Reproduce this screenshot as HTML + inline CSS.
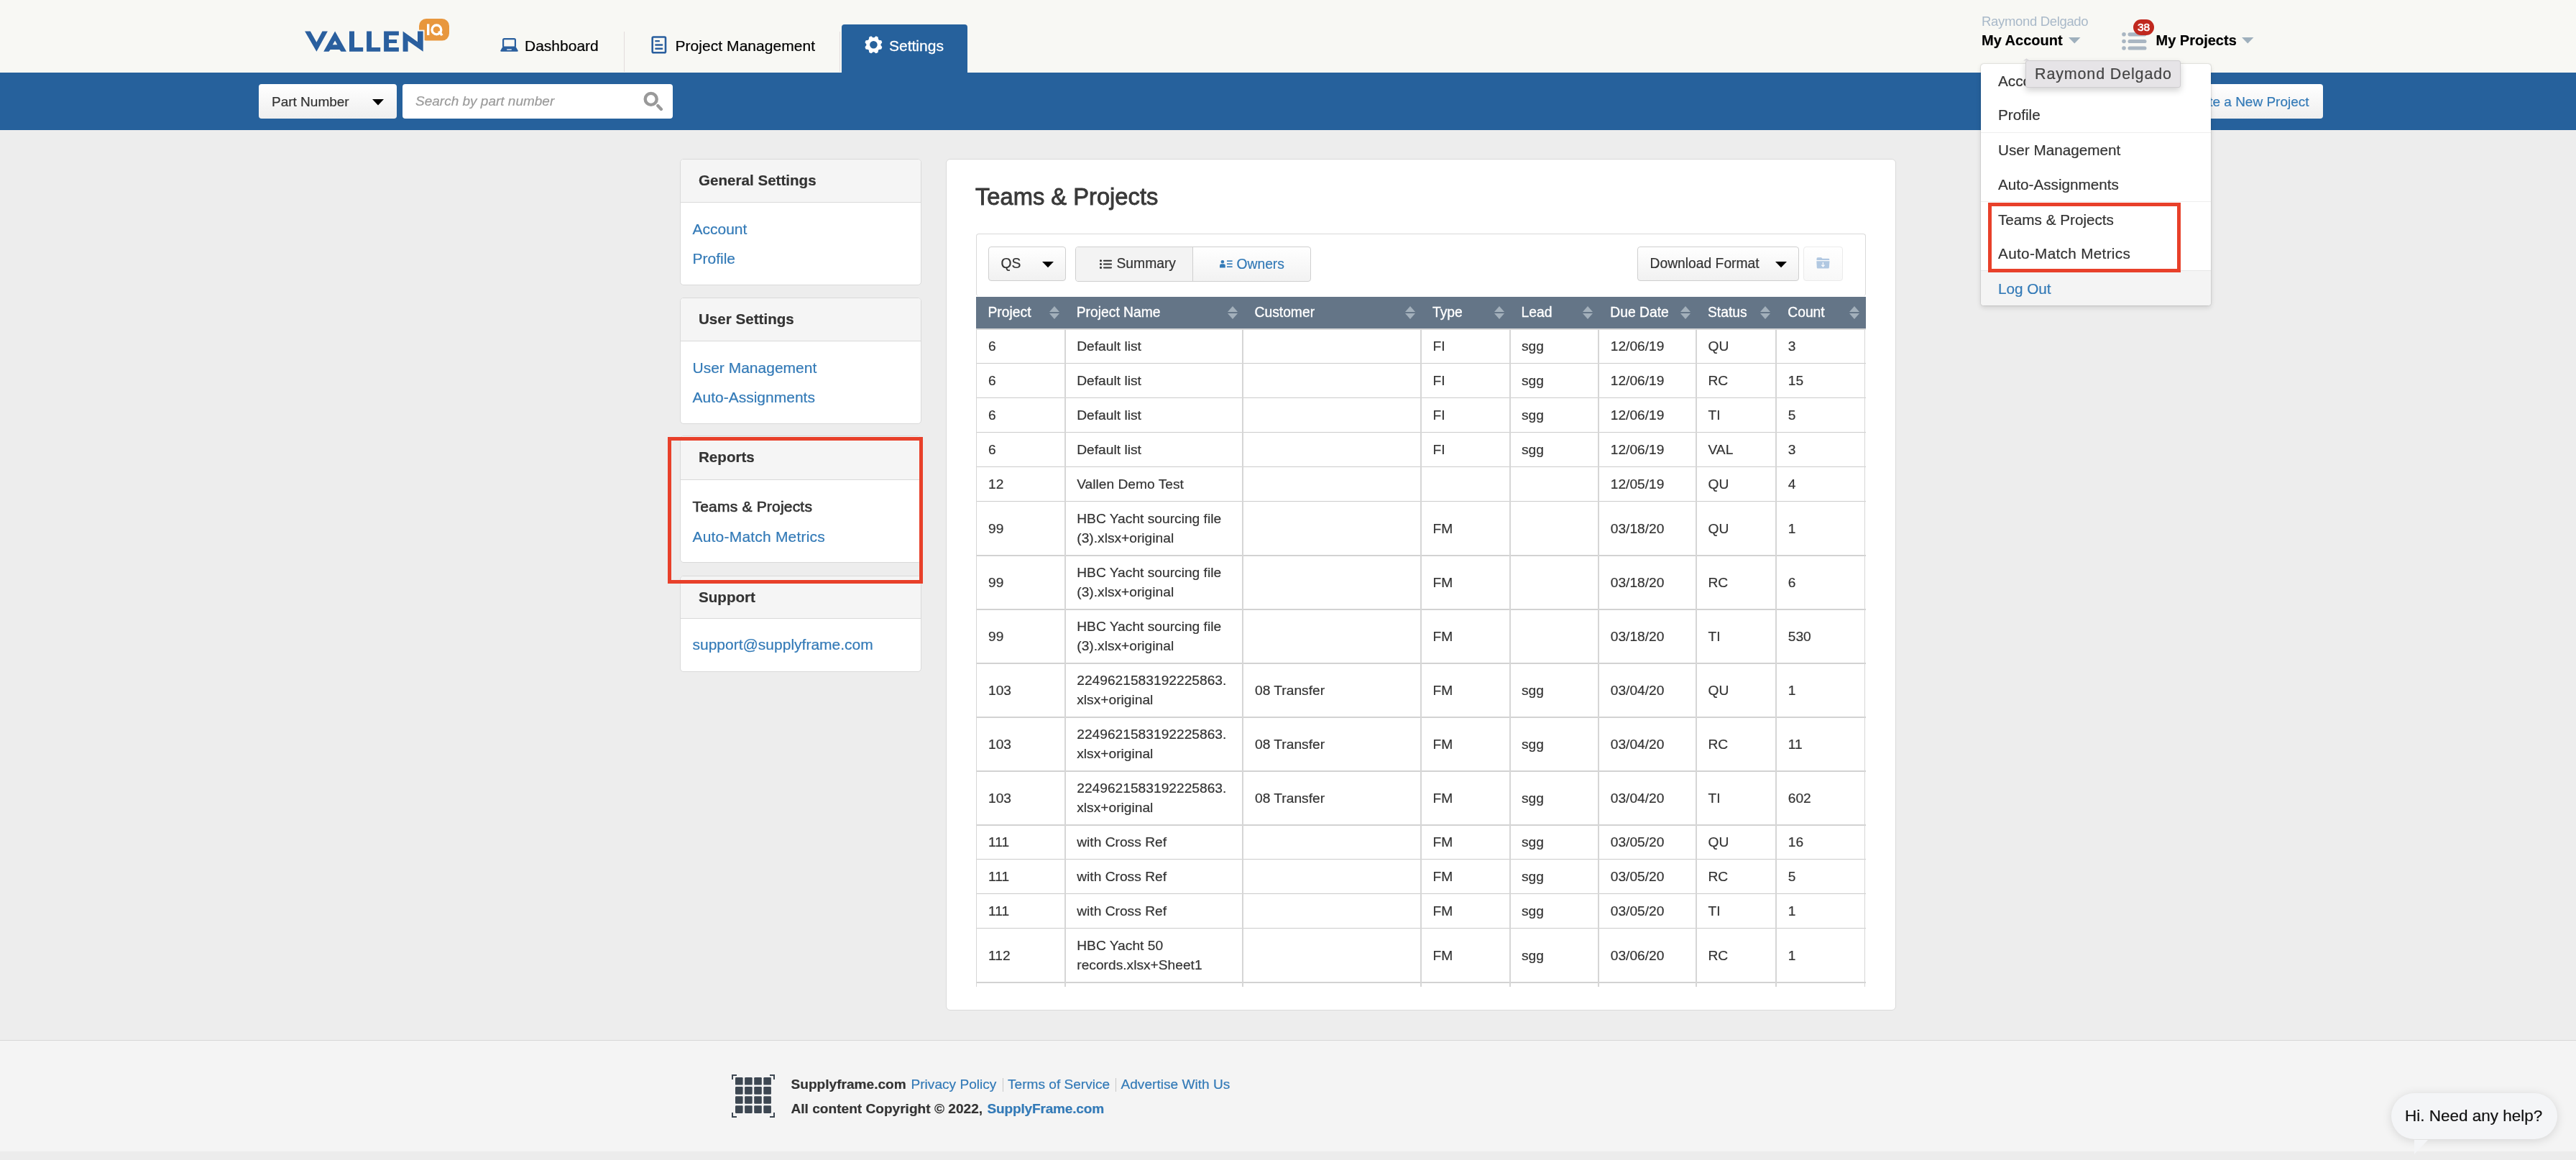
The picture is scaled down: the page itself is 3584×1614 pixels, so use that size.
<!DOCTYPE html>
<html><head><meta charset="utf-8"><title>Teams &amp; Projects</title>
<style>
html,body{margin:0;padding:0;width:3584px;height:1614px;overflow:hidden;background:#ececec}
body{position:relative;font-family:"Liberation Sans", sans-serif}
.t{position:absolute;white-space:nowrap;-webkit-text-stroke:0.2px currentColor}
.r{position:absolute;display:block}
</style></head><body><div id="root" style="position:absolute;left:0;top:0;width:3584px;height:1614px;will-change:transform;overflow:hidden">
<div class="r" style="left:0px;top:0px;width:3584px;height:101px;background:#f8f8f4"></div><div class="r" style="left:0px;top:101px;width:3584px;height:80px;background:#26619c"></div><div class="r" style="left:0px;top:181px;width:3584px;height:1266px;background:#ededed"></div><div class="r" style="left:0px;top:1447px;width:3584px;height:1px;background:#d6d6d6"></div><div class="r" style="left:0px;top:1448px;width:3584px;height:154px;background:#f4f4f4"></div><div class="r" style="left:0px;top:1602px;width:3584px;height:12px;background:#ececec"></div><svg class="r" style="left:0px;top:0px" width="640" height="80" viewBox="0 0 640 80"><polygon fill="#2a5f9e" points="424.1,43.6 431.8,43.6 440.4,58.7 448.5,43.6 455.9,43.6 440.4,71.7"/><path fill="#2a5f9e" fill-rule="evenodd" d="M450.2,71.7 L466.1,43.6 L482,71.7 L474.6,71.7 L472.3,68.9 L459.6,68.9 L457.5,71.7 Z M462.8,62.3 L469.3,62.3 L466.1,56.6 Z"/><polygon fill="#2a5f9e" points="486.0,43.6 493.0,43.6 493.0,66.0 505.2,66.0 505.2,71.7 486.0,71.7"/><polygon fill="#2a5f9e" points="510.1,43.6 517.0,43.6 517.0,66.0 529.2,66.0 529.2,71.7 510.1,71.7"/><polygon fill="#2a5f9e" points="534.1,43.6 554.9,43.6 554.9,49.3 541.1,49.3 541.1,55.0 552.1,55.0 552.1,59.9 541.1,59.9 541.1,66.0 554.9,66.0 554.9,71.7 534.1,71.7"/><rect x="583" y="26.1" width="42" height="30.5" rx="10" fill="#e8973d"/><rect x="582" y="41.6" width="8.6" height="16" fill="#f8f8f4"/><polygon fill="#2a5f9e" points="560.6,71.7 560.6,43.6 581.0,58.3 581.0,43.6 588.7,43.6 588.7,71.7 567.6,57.0 567.6,71.7"/><rect x="594" y="33.4" width="3.4" height="15.5" fill="#fff"/><circle cx="607.4" cy="41.4" r="6.4" fill="none" stroke="#fff" stroke-width="3.3"/><polygon fill="#fff" points="609,44 613,43 616.5,48.5 613.5,50"/></svg><svg class="r" style="left:696px;top:53px" width="25" height="19" viewBox="0 0 25 19"><rect x="4.1" y="1.1" width="16.8" height="11.6" rx="1.6" fill="none" stroke="#2a5f9e" stroke-width="2.2"/><path d="M3.1,12.6 H21.9 L24.6,17.2 Q25,18.8 23.4,18.8 H1.6 Q0,18.8 0.4,17.2 Z" fill="#2a5f9e"/><rect x="9" y="15" width="7" height="1.9" rx="0.8" fill="#b3c6dc"/></svg><div class="t" style="left:730.00px;top:53.22px;font-size:21px;line-height:21px;color:#000;font-weight:normal;">Dashboard</div><div class="r" style="left:868px;top:44px;width:1px;height:56px;background:#e3dcdc"></div><svg class="r" style="left:906px;top:50px" width="22" height="25" viewBox="0 0 22 25"><rect x="1.7" y="1.5" width="18.3" height="21.7" rx="1.5" fill="none" stroke="#2a5f9e" stroke-width="2.6"/><rect x="5.3" y="5.9" width="6.6" height="2.4" rx="0.6" fill="#2a5f9e"/><rect x="5.3" y="11.2" width="10.9" height="2.5" rx="0.6" fill="#2a5f9e"/><rect x="5.3" y="16.4" width="10.9" height="2.5" rx="0.6" fill="#2a5f9e"/></svg><div class="t" style="left:939.50px;top:53.22px;font-size:21px;line-height:21px;color:#000;font-weight:normal;letter-spacing:0.05px">Project Management</div><div class="r" style="left:1168px;top:44px;width:1px;height:56px;background:#e3dcdc"></div><div class="r" style="left:1171px;top:34px;width:175px;height:67px;background:#26619c;border-radius:4px 4px 0 0"></div><svg class="r" style="left:1200px;top:47px" width="31" height="31" viewBox="0 0 31 31"><path fill="#fff" fill-rule="evenodd" d="M17.22,4.45 L18.71,3.35 L21.51,4.51 L21.79,6.34 A2.3,2.3 0 0,0 24.36,8.91 L26.19,9.19 L27.35,11.99 L26.25,13.48 A2.3,2.3 0 0,0 26.25,17.12 L27.35,18.61 L26.19,21.41 L24.36,21.69 A2.3,2.3 0 0,0 21.79,24.26 L21.51,26.09 L18.71,27.25 L17.22,26.15 A2.3,2.3 0 0,0 13.58,26.15 L12.09,27.25 L9.29,26.09 L9.01,24.26 A2.3,2.3 0 0,0 6.44,21.69 L4.61,21.41 L3.45,18.61 L4.55,17.12 A2.3,2.3 0 0,0 4.55,13.48 L3.45,11.99 L4.61,9.19 L6.44,8.91 A2.3,2.3 0 0,0 9.01,6.34 L9.29,4.51 L12.09,3.35 L13.58,4.45 A2.3,2.3 0 0,0 17.22,4.45 Z M15.4,10.0 A5.3,5.3 0 1,0 15.4,20.6 A5.3,5.3 0 1,0 15.4,10.0 Z"/></svg><div class="t" style="left:1237.00px;top:53.22px;font-size:21px;line-height:21px;color:#fff;font-weight:normal;-webkit-text-stroke:0.3px #fff">Settings</div><div class="r" style="left:360px;top:117px;width:192px;height:48px;background:linear-gradient(#ffffff,#efefef);border-radius:4px"></div><div class="t" style="left:378.00px;top:131.92px;font-size:19px;line-height:19px;color:#333;font-weight:normal;">Part Number</div><svg class="r" style="left:518px;top:137.5px" width="16" height="9" viewBox="0 0 16 9"><polygon points="0,0 16,0 8,8.5" fill="#000"/></svg><div class="r" style="left:560px;top:117px;width:376px;height:48px;background:#fff;border-radius:4px"></div><div class="t" style="left:578.00px;top:130.92px;font-size:19px;line-height:19px;color:#9a9a9a;font-weight:normal;font-style:italic">Search by part number</div><svg class="r" style="left:895px;top:127px" width="28" height="28" viewBox="0 0 28 28"><circle cx="10.7" cy="10.9" r="8" fill="none" stroke="#999" stroke-width="4.4"/><line x1="20.4" y1="20.2" x2="24.9" y2="24.9" stroke="#999" stroke-width="4.4" stroke-linecap="round"/></svg><div class="r" style="left:3012px;top:117px;width:220px;height:48px;background:linear-gradient(#ffffff,#efefef);border-radius:4px"></div><div class="t" style="left:3032.00px;top:131.92px;font-size:19px;line-height:19px;color:#337ab7;font-weight:normal;">Create a New Project</div><div class="t" style="left:2757.00px;top:20.94px;font-size:18.5px;line-height:18.5px;color:#a9b9c9;font-weight:normal;letter-spacing:-0.33px;-webkit-text-stroke:0">Raymond Delgado</div><div class="t" style="left:2757.00px;top:46.07px;font-size:20px;line-height:20px;color:#000;font-weight:bold;">My Account</div><svg class="r" style="left:2878px;top:52px" width="17" height="9" viewBox="0 0 17 9"><polygon points="0,0 16.5,0 8.25,8.6" fill="#9fb0bd"/></svg><svg class="r" style="left:2952px;top:45px" width="35" height="25" viewBox="0 0 35 25"><g fill="#a9b6c2"><circle cx="3" cy="2.8" r="2.8"/><circle cx="3" cy="12.5" r="2.8"/><circle cx="3" cy="22" r="2.8"/><rect x="8.5" y="0.2" width="26" height="5.2" rx="2.6"/><rect x="8.5" y="9.9" width="26" height="5.2" rx="2.6"/><rect x="8.5" y="19.4" width="26" height="5.2" rx="2.6"/></g></svg><div class="r" style="left:2968px;top:27px;width:29px;height:22px;background:#c0281e;border-radius:11px"></div><div class="t" style="left:2968.00px;top:30.18px;font-size:15.5px;line-height:15.5px;color:#fff;font-weight:normal;width:29px;text-align:center;-webkit-text-stroke:0.6px #fff">38</div><div class="t" style="left:2999.50px;top:46.07px;font-size:20px;line-height:20px;color:#000;font-weight:bold;">My Projects</div><svg class="r" style="left:3119px;top:52px" width="17" height="9" viewBox="0 0 17 9"><polygon points="0,0 16.5,0 8.25,8.6" fill="#9fb0bd"/></svg><div class="r" style="left:946px;top:221px;width:336px;height:176px;background:#fff;border:1px solid #d9d9d9;border-radius:5px;box-sizing:border-box"></div><div class="r" style="left:947px;top:222px;width:334px;height:60px;background:#f5f5f5;border-bottom:1px solid #d9d9d9;border-radius:4px 4px 0 0;box-sizing:border-box"></div><div class="t" style="left:972.00px;top:240.56px;font-size:20.6px;line-height:20.6px;color:#333;font-weight:bold;">General Settings</div><div class="t" style="left:963.50px;top:307.82px;font-size:21px;line-height:21px;color:#337ab7;font-weight:normal;">Account</div><div class="t" style="left:963.50px;top:349.22px;font-size:21px;line-height:21px;color:#337ab7;font-weight:normal;">Profile</div><div class="r" style="left:946px;top:414px;width:336px;height:176px;background:#fff;border:1px solid #d9d9d9;border-radius:5px;box-sizing:border-box"></div><div class="r" style="left:947px;top:415px;width:334px;height:60px;background:#f5f5f5;border-bottom:1px solid #d9d9d9;border-radius:4px 4px 0 0;box-sizing:border-box"></div><div class="t" style="left:972.00px;top:433.56px;font-size:20.6px;line-height:20.6px;color:#333;font-weight:bold;">User Settings</div><div class="t" style="left:963.50px;top:500.82px;font-size:21px;line-height:21px;color:#337ab7;font-weight:normal;">User Management</div><div class="t" style="left:963.50px;top:542.22px;font-size:21px;line-height:21px;color:#337ab7;font-weight:normal;">Auto-Assignments</div><div class="r" style="left:946px;top:606px;width:336px;height:177px;background:#fff;border:1px solid #d9d9d9;border-radius:5px;box-sizing:border-box"></div><div class="r" style="left:947px;top:607px;width:334px;height:61px;background:#f5f5f5;border-bottom:1px solid #d9d9d9;border-radius:4px 4px 0 0;box-sizing:border-box"></div><div class="t" style="left:972.00px;top:625.56px;font-size:20.6px;line-height:20.6px;color:#333;font-weight:bold;">Reports</div><div class="t" style="left:963.50px;top:693.72px;font-size:21px;line-height:21px;color:#333;font-weight:normal;-webkit-text-stroke:0.65px #333;letter-spacing:0.2px">Teams &amp; Projects</div><div class="t" style="left:963.50px;top:735.92px;font-size:21px;line-height:21px;color:#337ab7;font-weight:normal;letter-spacing:0.2px">Auto-Match Metrics</div><div class="r" style="left:946px;top:801px;width:336px;height:134px;background:#fff;border:1px solid #d9d9d9;border-radius:5px;box-sizing:border-box"></div><div class="r" style="left:947px;top:802px;width:334px;height:59px;background:#f5f5f5;border-bottom:1px solid #d9d9d9;border-radius:4px 4px 0 0;box-sizing:border-box"></div><div class="t" style="left:972.00px;top:820.56px;font-size:20.6px;line-height:20.6px;color:#333;font-weight:bold;">Support</div><div class="t" style="left:963.50px;top:886.22px;font-size:21px;line-height:21px;color:#337ab7;font-weight:normal;">support@supplyframe.com</div><div class="r" style="left:929px;top:608px;width:355px;height:204px;border:5px solid #e8402a;box-sizing:border-box"></div><div class="r" style="left:1316px;top:221px;width:1322px;height:1185px;background:#fff;border:1px solid #d9d9d9;border-radius:6px;box-sizing:border-box"></div><div class="t" style="left:1357.00px;top:258.32px;font-size:32.7px;line-height:32.7px;color:#3a3a3a;font-weight:normal;-webkit-text-stroke:0.9px #3a3a3a">Teams &amp; Projects</div><div class="r" style="left:1358px;top:325px;width:1238px;height:87px;border:1px solid #d9d9d9;border-bottom:none;border-radius:4px;box-sizing:border-box"></div><div class="r" style="left:1375px;top:343px;width:108px;height:48px;background:linear-gradient(#ffffff,#f1f1f1);border:1px solid #cfcfcf;border-radius:4px;box-sizing:border-box"></div><div class="t" style="left:1392.50px;top:357.41px;font-size:19.3px;line-height:19.3px;color:#333;font-weight:normal;">QS</div><svg class="r" style="left:1450px;top:363.75px" width="16" height="9" viewBox="0 0 16 9"><polygon points="0,0 16,0 8,8.3" fill="#000"/></svg><div class="r" style="left:1496px;top:343px;width:328px;height:49px;background:linear-gradient(#ffffff,#f2f2f2);border:1px solid #cfcfcf;border-radius:4px;box-sizing:border-box"></div><div class="r" style="left:1497px;top:344px;width:162px;height:47px;background:#f3f3f3;border-radius:3px 0 0 3px"></div><div class="r" style="left:1659px;top:344px;width:1px;height:47px;background:#cfcfcf"></div><svg class="r" style="left:1530px;top:360.5px" width="17" height="13" viewBox="0 0 17 13"><g fill="#333"><circle cx="1.5" cy="1.8" r="1.55"/><circle cx="1.5" cy="6.5" r="1.55"/><circle cx="1.5" cy="11.4" r="1.55"/><rect x="5" y="0.8" width="12" height="2" rx="0.8"/><rect x="5" y="5.5" width="12" height="2" rx="0.8"/><rect x="5" y="10.4" width="12" height="2" rx="0.8"/></g></svg><div class="t" style="left:1553.50px;top:357.41px;font-size:19.3px;line-height:19.3px;color:#333;font-weight:normal;">Summary</div><svg class="r" style="left:1697px;top:362px" width="18" height="10.5" viewBox="0 0 18 10.5"><g fill="#337ab7"><circle cx="3.9" cy="2.3" r="2.3"/><path d="M0,10.5 V7.6 Q0,5.3 2.4,5.3 H5.4 Q7.8,5.3 7.8,7.6 V10.5 Z"/><rect x="10" y="0.4" width="7.6" height="1.6"/><rect x="10" y="4.4" width="7.6" height="1.6"/><rect x="10" y="8.4" width="7.6" height="1.6"/></g></svg><div class="t" style="left:1720.50px;top:357.66px;font-size:19.3px;line-height:19.3px;color:#337ab7;font-weight:normal;">Owners</div><div class="r" style="left:2278px;top:343px;width:225px;height:48px;background:linear-gradient(#ffffff,#f1f1f1);border:1px solid #cfcfcf;border-radius:4px;box-sizing:border-box"></div><div class="t" style="left:2295.50px;top:357.41px;font-size:19.3px;line-height:19.3px;color:#333;font-weight:normal;">Download Format</div><svg class="r" style="left:2470px;top:363.75px" width="16" height="9" viewBox="0 0 16 9"><polygon points="0,0 16,0 8,8.3" fill="#000"/></svg><div class="r" style="left:2509px;top:343px;width:55px;height:48px;background:linear-gradient(#ffffff,#f8f8f8);border:1px solid #ebebeb;border-radius:4px;box-sizing:border-box"></div><svg class="r" style="left:2527px;top:358px" width="19" height="16" viewBox="0 0 19 16"><path d="M0.5,2 Q0.5,0.3 2,0.3 H7 L8.5,1.8 H17 Q18.3,1.8 18.3,3 V4 H0.5 Z" fill="#b1c8e1"/><path d="M0.3,5.2 H18.5 L17.8,14.5 Q17.7,15.6 16.6,15.6 H2 Q0.9,15.6 0.8,14.5 Z" fill="#b1c8e1"/><path d="M9.4,7 V12.6 M7.2,10.6 L9.4,12.8 L11.6,10.6" stroke="#fff" stroke-width="1.2" fill="none"/></svg><div class="r" style="left:1358px;top:413px;width:1238px;height:44px;background:#647587"></div><div class="r" style="left:1358px;top:457px;width:1238px;height:2px;background:#d8d8d8"></div><div class="t" style="left:1374.50px;top:425.16px;font-size:19.3px;line-height:19.3px;color:#fff;font-weight:normal;-webkit-text-stroke:0.35px #fff">Project</div><svg class="r" style="left:1459.75px;top:425.5px" width="14" height="18" viewBox="0 0 14 18"><polygon points="0,8 14,8 7,0" fill="#a3b0bb"/><polygon points="0,10 14,10 7,18" fill="#a3b0bb"/></svg><div class="t" style="left:1497.75px;top:425.16px;font-size:19.3px;line-height:19.3px;color:#fff;font-weight:normal;-webkit-text-stroke:0.35px #fff">Project Name</div><svg class="r" style="left:1707.5px;top:425.5px" width="14" height="18" viewBox="0 0 14 18"><polygon points="0,8 14,8 7,0" fill="#a3b0bb"/><polygon points="0,10 14,10 7,18" fill="#a3b0bb"/></svg><div class="t" style="left:1745.50px;top:425.16px;font-size:19.3px;line-height:19.3px;color:#fff;font-weight:normal;-webkit-text-stroke:0.35px #fff">Customer</div><svg class="r" style="left:1955px;top:425.5px" width="14" height="18" viewBox="0 0 14 18"><polygon points="0,8 14,8 7,0" fill="#a3b0bb"/><polygon points="0,10 14,10 7,18" fill="#a3b0bb"/></svg><div class="t" style="left:1993.00px;top:425.16px;font-size:19.3px;line-height:19.3px;color:#fff;font-weight:normal;-webkit-text-stroke:0.35px #fff">Type</div><svg class="r" style="left:2078.5px;top:425.5px" width="14" height="18" viewBox="0 0 14 18"><polygon points="0,8 14,8 7,0" fill="#a3b0bb"/><polygon points="0,10 14,10 7,18" fill="#a3b0bb"/></svg><div class="t" style="left:2116.50px;top:425.16px;font-size:19.3px;line-height:19.3px;color:#fff;font-weight:normal;-webkit-text-stroke:0.35px #fff">Lead</div><svg class="r" style="left:2202.25px;top:425.5px" width="14" height="18" viewBox="0 0 14 18"><polygon points="0,8 14,8 7,0" fill="#a3b0bb"/><polygon points="0,10 14,10 7,18" fill="#a3b0bb"/></svg><div class="t" style="left:2240.25px;top:425.16px;font-size:19.3px;line-height:19.3px;color:#fff;font-weight:normal;-webkit-text-stroke:0.35px #fff">Due Date</div><svg class="r" style="left:2338px;top:425.5px" width="14" height="18" viewBox="0 0 14 18"><polygon points="0,8 14,8 7,0" fill="#a3b0bb"/><polygon points="0,10 14,10 7,18" fill="#a3b0bb"/></svg><div class="t" style="left:2376.00px;top:425.16px;font-size:19.3px;line-height:19.3px;color:#fff;font-weight:normal;-webkit-text-stroke:0.35px #fff">Status</div><svg class="r" style="left:2449.25px;top:425.5px" width="14" height="18" viewBox="0 0 14 18"><polygon points="0,8 14,8 7,0" fill="#a3b0bb"/><polygon points="0,10 14,10 7,18" fill="#a3b0bb"/></svg><div class="t" style="left:2487.25px;top:425.16px;font-size:19.3px;line-height:19.3px;color:#fff;font-weight:normal;-webkit-text-stroke:0.35px #fff">Count</div><svg class="r" style="left:2573px;top:425.5px" width="14" height="18" viewBox="0 0 14 18"><polygon points="0,8 14,8 7,0" fill="#a3b0bb"/><polygon points="0,10 14,10 7,18" fill="#a3b0bb"/></svg><div class="t" style="left:1375.00px;top:472.25px;font-size:19.2px;line-height:19.2px;color:#333;font-weight:normal;">6</div><div class="t" style="left:1498.25px;top:472.25px;font-size:19.2px;line-height:19.2px;color:#333;font-weight:normal;">Default list</div><div class="t" style="left:1993.50px;top:472.25px;font-size:19.2px;line-height:19.2px;color:#333;font-weight:normal;">FI</div><div class="t" style="left:2117.00px;top:472.25px;font-size:19.2px;line-height:19.2px;color:#333;font-weight:normal;">sgg</div><div class="t" style="left:2240.75px;top:472.25px;font-size:19.2px;line-height:19.2px;color:#333;font-weight:normal;">12/06/19</div><div class="t" style="left:2376.50px;top:472.25px;font-size:19.2px;line-height:19.2px;color:#333;font-weight:normal;">QU</div><div class="t" style="left:2487.75px;top:472.25px;font-size:19.2px;line-height:19.2px;color:#333;font-weight:normal;">3</div><div class="t" style="left:1375.00px;top:520.25px;font-size:19.2px;line-height:19.2px;color:#333;font-weight:normal;">6</div><div class="t" style="left:1498.25px;top:520.25px;font-size:19.2px;line-height:19.2px;color:#333;font-weight:normal;">Default list</div><div class="t" style="left:1993.50px;top:520.25px;font-size:19.2px;line-height:19.2px;color:#333;font-weight:normal;">FI</div><div class="t" style="left:2117.00px;top:520.25px;font-size:19.2px;line-height:19.2px;color:#333;font-weight:normal;">sgg</div><div class="t" style="left:2240.75px;top:520.25px;font-size:19.2px;line-height:19.2px;color:#333;font-weight:normal;">12/06/19</div><div class="t" style="left:2376.50px;top:520.25px;font-size:19.2px;line-height:19.2px;color:#333;font-weight:normal;">RC</div><div class="t" style="left:2487.75px;top:520.25px;font-size:19.2px;line-height:19.2px;color:#333;font-weight:normal;">15</div><div class="t" style="left:1375.00px;top:568.25px;font-size:19.2px;line-height:19.2px;color:#333;font-weight:normal;">6</div><div class="t" style="left:1498.25px;top:568.25px;font-size:19.2px;line-height:19.2px;color:#333;font-weight:normal;">Default list</div><div class="t" style="left:1993.50px;top:568.25px;font-size:19.2px;line-height:19.2px;color:#333;font-weight:normal;">FI</div><div class="t" style="left:2117.00px;top:568.25px;font-size:19.2px;line-height:19.2px;color:#333;font-weight:normal;">sgg</div><div class="t" style="left:2240.75px;top:568.25px;font-size:19.2px;line-height:19.2px;color:#333;font-weight:normal;">12/06/19</div><div class="t" style="left:2376.50px;top:568.25px;font-size:19.2px;line-height:19.2px;color:#333;font-weight:normal;">TI</div><div class="t" style="left:2487.75px;top:568.25px;font-size:19.2px;line-height:19.2px;color:#333;font-weight:normal;">5</div><div class="t" style="left:1375.00px;top:616.25px;font-size:19.2px;line-height:19.2px;color:#333;font-weight:normal;">6</div><div class="t" style="left:1498.25px;top:616.25px;font-size:19.2px;line-height:19.2px;color:#333;font-weight:normal;">Default list</div><div class="t" style="left:1993.50px;top:616.25px;font-size:19.2px;line-height:19.2px;color:#333;font-weight:normal;">FI</div><div class="t" style="left:2117.00px;top:616.25px;font-size:19.2px;line-height:19.2px;color:#333;font-weight:normal;">sgg</div><div class="t" style="left:2240.75px;top:616.25px;font-size:19.2px;line-height:19.2px;color:#333;font-weight:normal;">12/06/19</div><div class="t" style="left:2376.50px;top:616.25px;font-size:19.2px;line-height:19.2px;color:#333;font-weight:normal;">VAL</div><div class="t" style="left:2487.75px;top:616.25px;font-size:19.2px;line-height:19.2px;color:#333;font-weight:normal;">3</div><div class="t" style="left:1375.00px;top:664.25px;font-size:19.2px;line-height:19.2px;color:#333;font-weight:normal;">12</div><div class="t" style="left:1498.25px;top:664.25px;font-size:19.2px;line-height:19.2px;color:#333;font-weight:normal;">Vallen Demo Test</div><div class="t" style="left:2240.75px;top:664.25px;font-size:19.2px;line-height:19.2px;color:#333;font-weight:normal;">12/05/19</div><div class="t" style="left:2376.50px;top:664.25px;font-size:19.2px;line-height:19.2px;color:#333;font-weight:normal;">QU</div><div class="t" style="left:2487.75px;top:664.25px;font-size:19.2px;line-height:19.2px;color:#333;font-weight:normal;">4</div><div class="t" style="left:1375.00px;top:725.75px;font-size:19.2px;line-height:19.2px;color:#333;font-weight:normal;">99</div><div class="t" style="left:1498.25px;top:712.25px;font-size:19.2px;line-height:19.2px;color:#333;font-weight:normal;">HBC Yacht sourcing file</div><div class="t" style="left:1498.25px;top:739.25px;font-size:19.2px;line-height:19.2px;color:#333;font-weight:normal;">(3).xlsx+original</div><div class="t" style="left:1993.50px;top:725.75px;font-size:19.2px;line-height:19.2px;color:#333;font-weight:normal;">FM</div><div class="t" style="left:2240.75px;top:725.75px;font-size:19.2px;line-height:19.2px;color:#333;font-weight:normal;">03/18/20</div><div class="t" style="left:2376.50px;top:725.75px;font-size:19.2px;line-height:19.2px;color:#333;font-weight:normal;">QU</div><div class="t" style="left:2487.75px;top:725.75px;font-size:19.2px;line-height:19.2px;color:#333;font-weight:normal;">1</div><div class="t" style="left:1375.00px;top:800.75px;font-size:19.2px;line-height:19.2px;color:#333;font-weight:normal;">99</div><div class="t" style="left:1498.25px;top:787.25px;font-size:19.2px;line-height:19.2px;color:#333;font-weight:normal;">HBC Yacht sourcing file</div><div class="t" style="left:1498.25px;top:814.25px;font-size:19.2px;line-height:19.2px;color:#333;font-weight:normal;">(3).xlsx+original</div><div class="t" style="left:1993.50px;top:800.75px;font-size:19.2px;line-height:19.2px;color:#333;font-weight:normal;">FM</div><div class="t" style="left:2240.75px;top:800.75px;font-size:19.2px;line-height:19.2px;color:#333;font-weight:normal;">03/18/20</div><div class="t" style="left:2376.50px;top:800.75px;font-size:19.2px;line-height:19.2px;color:#333;font-weight:normal;">RC</div><div class="t" style="left:2487.75px;top:800.75px;font-size:19.2px;line-height:19.2px;color:#333;font-weight:normal;">6</div><div class="t" style="left:1375.00px;top:875.75px;font-size:19.2px;line-height:19.2px;color:#333;font-weight:normal;">99</div><div class="t" style="left:1498.25px;top:862.25px;font-size:19.2px;line-height:19.2px;color:#333;font-weight:normal;">HBC Yacht sourcing file</div><div class="t" style="left:1498.25px;top:889.25px;font-size:19.2px;line-height:19.2px;color:#333;font-weight:normal;">(3).xlsx+original</div><div class="t" style="left:1993.50px;top:875.75px;font-size:19.2px;line-height:19.2px;color:#333;font-weight:normal;">FM</div><div class="t" style="left:2240.75px;top:875.75px;font-size:19.2px;line-height:19.2px;color:#333;font-weight:normal;">03/18/20</div><div class="t" style="left:2376.50px;top:875.75px;font-size:19.2px;line-height:19.2px;color:#333;font-weight:normal;">TI</div><div class="t" style="left:2487.75px;top:875.75px;font-size:19.2px;line-height:19.2px;color:#333;font-weight:normal;">530</div><div class="t" style="left:1375.00px;top:950.75px;font-size:19.2px;line-height:19.2px;color:#333;font-weight:normal;">103</div><div class="t" style="left:1498.25px;top:937.25px;font-size:19.2px;line-height:19.2px;color:#333;font-weight:normal;">2249621583192225863.</div><div class="t" style="left:1498.25px;top:964.25px;font-size:19.2px;line-height:19.2px;color:#333;font-weight:normal;">xlsx+original</div><div class="t" style="left:1746.00px;top:950.75px;font-size:19.2px;line-height:19.2px;color:#333;font-weight:normal;">08 Transfer</div><div class="t" style="left:1993.50px;top:950.75px;font-size:19.2px;line-height:19.2px;color:#333;font-weight:normal;">FM</div><div class="t" style="left:2117.00px;top:950.75px;font-size:19.2px;line-height:19.2px;color:#333;font-weight:normal;">sgg</div><div class="t" style="left:2240.75px;top:950.75px;font-size:19.2px;line-height:19.2px;color:#333;font-weight:normal;">03/04/20</div><div class="t" style="left:2376.50px;top:950.75px;font-size:19.2px;line-height:19.2px;color:#333;font-weight:normal;">QU</div><div class="t" style="left:2487.75px;top:950.75px;font-size:19.2px;line-height:19.2px;color:#333;font-weight:normal;">1</div><div class="t" style="left:1375.00px;top:1025.75px;font-size:19.2px;line-height:19.2px;color:#333;font-weight:normal;">103</div><div class="t" style="left:1498.25px;top:1012.25px;font-size:19.2px;line-height:19.2px;color:#333;font-weight:normal;">2249621583192225863.</div><div class="t" style="left:1498.25px;top:1039.25px;font-size:19.2px;line-height:19.2px;color:#333;font-weight:normal;">xlsx+original</div><div class="t" style="left:1746.00px;top:1025.75px;font-size:19.2px;line-height:19.2px;color:#333;font-weight:normal;">08 Transfer</div><div class="t" style="left:1993.50px;top:1025.75px;font-size:19.2px;line-height:19.2px;color:#333;font-weight:normal;">FM</div><div class="t" style="left:2117.00px;top:1025.75px;font-size:19.2px;line-height:19.2px;color:#333;font-weight:normal;">sgg</div><div class="t" style="left:2240.75px;top:1025.75px;font-size:19.2px;line-height:19.2px;color:#333;font-weight:normal;">03/04/20</div><div class="t" style="left:2376.50px;top:1025.75px;font-size:19.2px;line-height:19.2px;color:#333;font-weight:normal;">RC</div><div class="t" style="left:2487.75px;top:1025.75px;font-size:19.2px;line-height:19.2px;color:#333;font-weight:normal;">11</div><div class="t" style="left:1375.00px;top:1100.75px;font-size:19.2px;line-height:19.2px;color:#333;font-weight:normal;">103</div><div class="t" style="left:1498.25px;top:1087.25px;font-size:19.2px;line-height:19.2px;color:#333;font-weight:normal;">2249621583192225863.</div><div class="t" style="left:1498.25px;top:1114.25px;font-size:19.2px;line-height:19.2px;color:#333;font-weight:normal;">xlsx+original</div><div class="t" style="left:1746.00px;top:1100.75px;font-size:19.2px;line-height:19.2px;color:#333;font-weight:normal;">08 Transfer</div><div class="t" style="left:1993.50px;top:1100.75px;font-size:19.2px;line-height:19.2px;color:#333;font-weight:normal;">FM</div><div class="t" style="left:2117.00px;top:1100.75px;font-size:19.2px;line-height:19.2px;color:#333;font-weight:normal;">sgg</div><div class="t" style="left:2240.75px;top:1100.75px;font-size:19.2px;line-height:19.2px;color:#333;font-weight:normal;">03/04/20</div><div class="t" style="left:2376.50px;top:1100.75px;font-size:19.2px;line-height:19.2px;color:#333;font-weight:normal;">TI</div><div class="t" style="left:2487.75px;top:1100.75px;font-size:19.2px;line-height:19.2px;color:#333;font-weight:normal;">602</div><div class="t" style="left:1375.00px;top:1162.25px;font-size:19.2px;line-height:19.2px;color:#333;font-weight:normal;">111</div><div class="t" style="left:1498.25px;top:1162.25px;font-size:19.2px;line-height:19.2px;color:#333;font-weight:normal;">with Cross Ref</div><div class="t" style="left:1993.50px;top:1162.25px;font-size:19.2px;line-height:19.2px;color:#333;font-weight:normal;">FM</div><div class="t" style="left:2117.00px;top:1162.25px;font-size:19.2px;line-height:19.2px;color:#333;font-weight:normal;">sgg</div><div class="t" style="left:2240.75px;top:1162.25px;font-size:19.2px;line-height:19.2px;color:#333;font-weight:normal;">03/05/20</div><div class="t" style="left:2376.50px;top:1162.25px;font-size:19.2px;line-height:19.2px;color:#333;font-weight:normal;">QU</div><div class="t" style="left:2487.75px;top:1162.25px;font-size:19.2px;line-height:19.2px;color:#333;font-weight:normal;">16</div><div class="t" style="left:1375.00px;top:1210.25px;font-size:19.2px;line-height:19.2px;color:#333;font-weight:normal;">111</div><div class="t" style="left:1498.25px;top:1210.25px;font-size:19.2px;line-height:19.2px;color:#333;font-weight:normal;">with Cross Ref</div><div class="t" style="left:1993.50px;top:1210.25px;font-size:19.2px;line-height:19.2px;color:#333;font-weight:normal;">FM</div><div class="t" style="left:2117.00px;top:1210.25px;font-size:19.2px;line-height:19.2px;color:#333;font-weight:normal;">sgg</div><div class="t" style="left:2240.75px;top:1210.25px;font-size:19.2px;line-height:19.2px;color:#333;font-weight:normal;">03/05/20</div><div class="t" style="left:2376.50px;top:1210.25px;font-size:19.2px;line-height:19.2px;color:#333;font-weight:normal;">RC</div><div class="t" style="left:2487.75px;top:1210.25px;font-size:19.2px;line-height:19.2px;color:#333;font-weight:normal;">5</div><div class="t" style="left:1375.00px;top:1258.25px;font-size:19.2px;line-height:19.2px;color:#333;font-weight:normal;">111</div><div class="t" style="left:1498.25px;top:1258.25px;font-size:19.2px;line-height:19.2px;color:#333;font-weight:normal;">with Cross Ref</div><div class="t" style="left:1993.50px;top:1258.25px;font-size:19.2px;line-height:19.2px;color:#333;font-weight:normal;">FM</div><div class="t" style="left:2117.00px;top:1258.25px;font-size:19.2px;line-height:19.2px;color:#333;font-weight:normal;">sgg</div><div class="t" style="left:2240.75px;top:1258.25px;font-size:19.2px;line-height:19.2px;color:#333;font-weight:normal;">03/05/20</div><div class="t" style="left:2376.50px;top:1258.25px;font-size:19.2px;line-height:19.2px;color:#333;font-weight:normal;">TI</div><div class="t" style="left:2487.75px;top:1258.25px;font-size:19.2px;line-height:19.2px;color:#333;font-weight:normal;">1</div><div class="t" style="left:1375.00px;top:1319.75px;font-size:19.2px;line-height:19.2px;color:#333;font-weight:normal;">112</div><div class="t" style="left:1498.25px;top:1306.25px;font-size:19.2px;line-height:19.2px;color:#333;font-weight:normal;">HBC Yacht 50</div><div class="t" style="left:1498.25px;top:1333.25px;font-size:19.2px;line-height:19.2px;color:#333;font-weight:normal;">records.xlsx+Sheet1</div><div class="t" style="left:1993.50px;top:1319.75px;font-size:19.2px;line-height:19.2px;color:#333;font-weight:normal;">FM</div><div class="t" style="left:2117.00px;top:1319.75px;font-size:19.2px;line-height:19.2px;color:#333;font-weight:normal;">sgg</div><div class="t" style="left:2240.75px;top:1319.75px;font-size:19.2px;line-height:19.2px;color:#333;font-weight:normal;">03/06/20</div><div class="t" style="left:2376.50px;top:1319.75px;font-size:19.2px;line-height:19.2px;color:#333;font-weight:normal;">RC</div><div class="t" style="left:2487.75px;top:1319.75px;font-size:19.2px;line-height:19.2px;color:#333;font-weight:normal;">1</div><div class="r" style="left:1358px;top:505px;width:1238px;height:1px;background:#cbcbcb"></div><div class="r" style="left:1358px;top:553px;width:1238px;height:1px;background:#cbcbcb"></div><div class="r" style="left:1358px;top:601px;width:1238px;height:1px;background:#cbcbcb"></div><div class="r" style="left:1358px;top:649px;width:1238px;height:1px;background:#cbcbcb"></div><div class="r" style="left:1358px;top:697px;width:1238px;height:1px;background:#cbcbcb"></div><div class="r" style="left:1358px;top:772px;width:1238px;height:2px;background:#d2d2d2"></div><div class="r" style="left:1358px;top:847px;width:1238px;height:2px;background:#d2d2d2"></div><div class="r" style="left:1358px;top:922px;width:1238px;height:2px;background:#d2d2d2"></div><div class="r" style="left:1358px;top:997px;width:1238px;height:2px;background:#d2d2d2"></div><div class="r" style="left:1358px;top:1072px;width:1238px;height:2px;background:#d2d2d2"></div><div class="r" style="left:1358px;top:1147px;width:1238px;height:2px;background:#d2d2d2"></div><div class="r" style="left:1358px;top:1195px;width:1238px;height:1px;background:#cbcbcb"></div><div class="r" style="left:1358px;top:1243px;width:1238px;height:1px;background:#cbcbcb"></div><div class="r" style="left:1358px;top:1291px;width:1238px;height:1px;background:#cbcbcb"></div><div class="r" style="left:1358px;top:1366px;width:1238px;height:2px;background:#d2d2d2"></div><div class="r" style="left:1358px;top:459px;width:1px;height:914px;background:#d6d6d6"></div><div class="r" style="left:1481px;top:459px;width:2px;height:914px;background:#d6d6d6"></div><div class="r" style="left:1728px;top:459px;width:2px;height:914px;background:#d6d6d6"></div><div class="r" style="left:1976px;top:459px;width:2px;height:914px;background:#d6d6d6"></div><div class="r" style="left:2100px;top:459px;width:2px;height:914px;background:#d6d6d6"></div><div class="r" style="left:2223px;top:459px;width:2px;height:914px;background:#d6d6d6"></div><div class="r" style="left:2359px;top:459px;width:2px;height:914px;background:#d6d6d6"></div><div class="r" style="left:2470px;top:459px;width:2px;height:914px;background:#d6d6d6"></div><div class="r" style="left:2594px;top:459px;width:1px;height:914px;background:#d6d6d6"></div><div class="r" style="left:2756px;top:89px;width:320px;height:336px;background:#fff;border-radius:4px;box-shadow:0 3px 7px rgba(0,0,0,0.13), 0 0 1.5px rgba(0,0,0,0.35)"></div><div class="r" style="left:2756px;top:377px;width:320px;height:48px;background:#f4f4f4;border-radius:0 0 4px 4px"></div><div class="r" style="left:2756px;top:184px;width:320px;height:1px;background:#eeeeee"></div><div class="r" style="left:2756px;top:280px;width:320px;height:1px;background:#eeeeee"></div><div class="r" style="left:2756px;top:376px;width:320px;height:1px;background:#e6e6e6"></div><div class="t" style="left:2780.00px;top:102.98px;font-size:20.7px;line-height:20.7px;color:#333;font-weight:normal;">Account</div><div class="t" style="left:2780.00px;top:150.48px;font-size:20.7px;line-height:20.7px;color:#333;font-weight:normal;">Profile</div><div class="t" style="left:2780.00px;top:199.48px;font-size:20.7px;line-height:20.7px;color:#333;font-weight:normal;">User Management</div><div class="t" style="left:2780.00px;top:247.48px;font-size:20.7px;line-height:20.7px;color:#333;font-weight:normal;">Auto-Assignments</div><div class="t" style="left:2780.00px;top:296.48px;font-size:20.7px;line-height:20.7px;color:#333;font-weight:normal;">Teams &amp; Projects</div><div class="t" style="left:2780.00px;top:343.48px;font-size:20.7px;line-height:20.7px;color:#333;font-weight:normal;letter-spacing:0.33px">Auto-Match Metrics</div><div class="t" style="left:2780.00px;top:392.48px;font-size:20.7px;line-height:20.7px;color:#337ab7;font-weight:normal;">Log Out</div><div class="r" style="left:2766px;top:282px;width:268px;height:97px;border:5px solid #e8402a;box-sizing:border-box"></div><div class="r" style="left:2818px;top:84px;width:216px;height:38px;background:#e6e4e7;border:1px solid #cfcdd0;border-radius:3px;box-sizing:border-box;box-shadow:0 4px 10px rgba(0,0,0,0.18)"></div><svg class="r" style="left:2814px;top:81px" width="10" height="3.5" viewBox="0 0 10 3.5"><polygon points="1,3.5 5.5,0.3 10,3.5" fill="#d9d7da"/></svg><div class="t" style="left:2831.00px;top:92.80px;font-size:21.5px;line-height:21.5px;color:#444;font-weight:normal;letter-spacing:0.85px">Raymond Delgado</div><svg class="r" style="left:1018px;top:1495px" width="60" height="60" viewBox="0 0 60 60"><g fill="#3d4752"><rect x="5.0" y="4.0" width="10.6" height="10.6" rx="1.2"/><rect x="5.0" y="17.1" width="10.6" height="10.6" rx="1.2"/><rect x="5.0" y="30.2" width="10.6" height="10.6" rx="1.2"/><rect x="5.0" y="43.3" width="10.6" height="10.6" rx="1.2"/><rect x="18.1" y="4.0" width="10.6" height="10.6" rx="1.2"/><rect x="18.1" y="17.1" width="10.6" height="10.6" rx="1.2"/><rect x="18.1" y="30.2" width="10.6" height="10.6" rx="1.2"/><rect x="18.1" y="43.3" width="10.6" height="10.6" rx="1.2"/><rect x="31.2" y="4.0" width="10.6" height="10.6" rx="1.2"/><rect x="31.2" y="17.1" width="10.6" height="10.6" rx="1.2"/><rect x="31.2" y="30.2" width="10.6" height="10.6" rx="1.2"/><rect x="31.2" y="43.3" width="10.6" height="10.6" rx="1.2"/><rect x="44.3" y="4.0" width="10.6" height="10.6" rx="1.2"/><rect x="44.3" y="17.1" width="10.6" height="10.6" rx="1.2"/><rect x="44.3" y="30.2" width="10.6" height="10.6" rx="1.2"/><rect x="44.3" y="43.3" width="10.6" height="10.6" rx="1.2"/></g><path d="M1,7 V1 H7 M53,1 H59 V7 M1,53 V59 H7 M53,59 H59 V53" fill="none" stroke="#3d4752" stroke-width="2"/></svg><div class="t" style="left:1100.50px;top:1498.83px;font-size:19.1px;line-height:19.1px;color:#333;font-weight:bold;">Supplyframe.com</div><div class="t" style="left:1267.50px;top:1498.83px;font-size:19.1px;line-height:19.1px;color:#337ab7;font-weight:normal;">Privacy Policy</div><div class="r" style="left:1395px;top:1500px;width:1px;height:19px;background:#c8c8c8"></div><div class="t" style="left:1402.00px;top:1498.83px;font-size:19.1px;line-height:19.1px;color:#337ab7;font-weight:normal;">Terms of Service</div><div class="r" style="left:1552px;top:1500px;width:1px;height:19px;background:#c8c8c8"></div><div class="t" style="left:1559.50px;top:1498.83px;font-size:19.1px;line-height:19.1px;color:#337ab7;font-weight:normal;">Advertise With Us</div><div class="t" style="left:1100.50px;top:1532.83px;font-size:19.1px;line-height:19.1px;color:#333;font-weight:bold;">All content Copyright © 2022,</div><div class="t" style="left:1373.50px;top:1532.83px;font-size:19.1px;line-height:19.1px;color:#337ab7;font-weight:bold;letter-spacing:-0.2px">SupplyFrame.com</div><div class="r" style="left:3327px;top:1521px;width:231px;height:64px;background:#f4f5f7;border-radius:32px;box-shadow:0 2px 14px rgba(0,0,0,0.13)"></div><svg class="r" style="left:3358px;top:1586px" width="22" height="22" viewBox="0 0 22 22"><polygon points="1,0 20,0 1,20" fill="#f4f5f7"/></svg><div class="t" style="left:3346.00px;top:1541.95px;font-size:22.5px;line-height:22.5px;color:#111;font-weight:normal;">Hi. Need any help?</div>
</div></body></html>
